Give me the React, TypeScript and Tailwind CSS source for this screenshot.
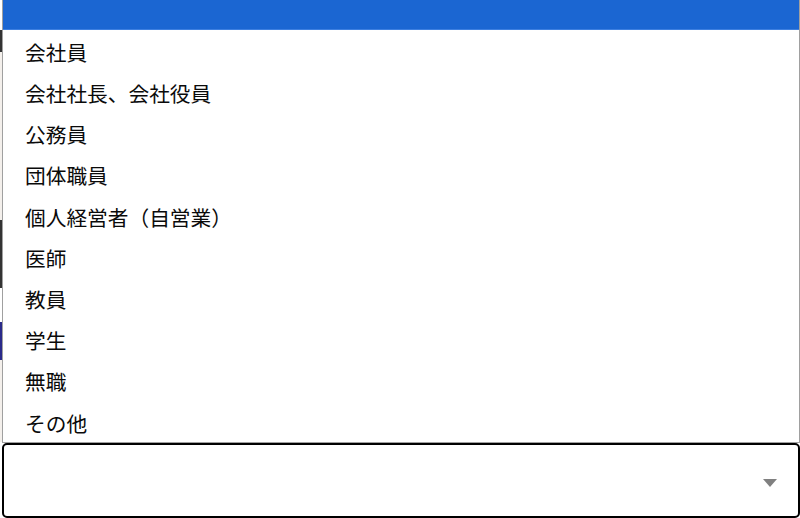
import React from "react";

const options = [
  "会社員",
  "会社社長、会社役員",
  "公務員",
  "団体職員",
  "個人経営者（自営業）",
  "医師",
  "教員",
  "学生",
  "無職",
  "その他",
];

export default function App() {
  return (
    <div
      className="w-[800px] h-[518px] bg-white flex overflow-hidden"
      style={{ fontFamily: '"Noto Sans CJK JP", "Noto Sans", sans-serif' }}
    >
      {/* remnants of page behind popup */}
      <div className="w-[2px] h-full flex flex-col">
        <div className="h-[30px] bg-white" />
        <div className="h-[22px] bg-[#333]" />
        <div className="h-[168px] bg-[#f4f0ec]" />
        <div className="h-[68px] bg-[#333]" />
        <div className="h-[34px] bg-white" />
        <div className="h-[38px] bg-[#2a2a8a]" />
        <div className="h-[82px] bg-[#f4f0ec]" />
        <div className="flex-1 bg-white" />
      </div>
      <div className="flex-1 flex flex-col">
        <div className="h-[443px] flex flex-col border-x border-b border-[#a0a0a0]">
          <div className="h-[30px] bg-[#1b66d2] border-b border-[#3d7fe0]" />
          <div className="flex-1 flex flex-col">
            {options.map((o) => (
              <div
                key={o}
                className="flex-1 flex items-center pl-[22px] pt-[3px] text-[20.7px] text-[#0a0a0a] leading-none"
              >
                {o}
              </div>
            ))}
          </div>
        </div>
        <div className="flex-1 border-2 border-black rounded-[5px] flex items-center justify-end pr-[21px]">
          <svg width="14" height="8" viewBox="0 0 14 8" className="mt-[4px]">
            <polygon points="0,0 14,0 7,8" fill="#808080" />
          </svg>
        </div>
      </div>
    </div>
  );
}
